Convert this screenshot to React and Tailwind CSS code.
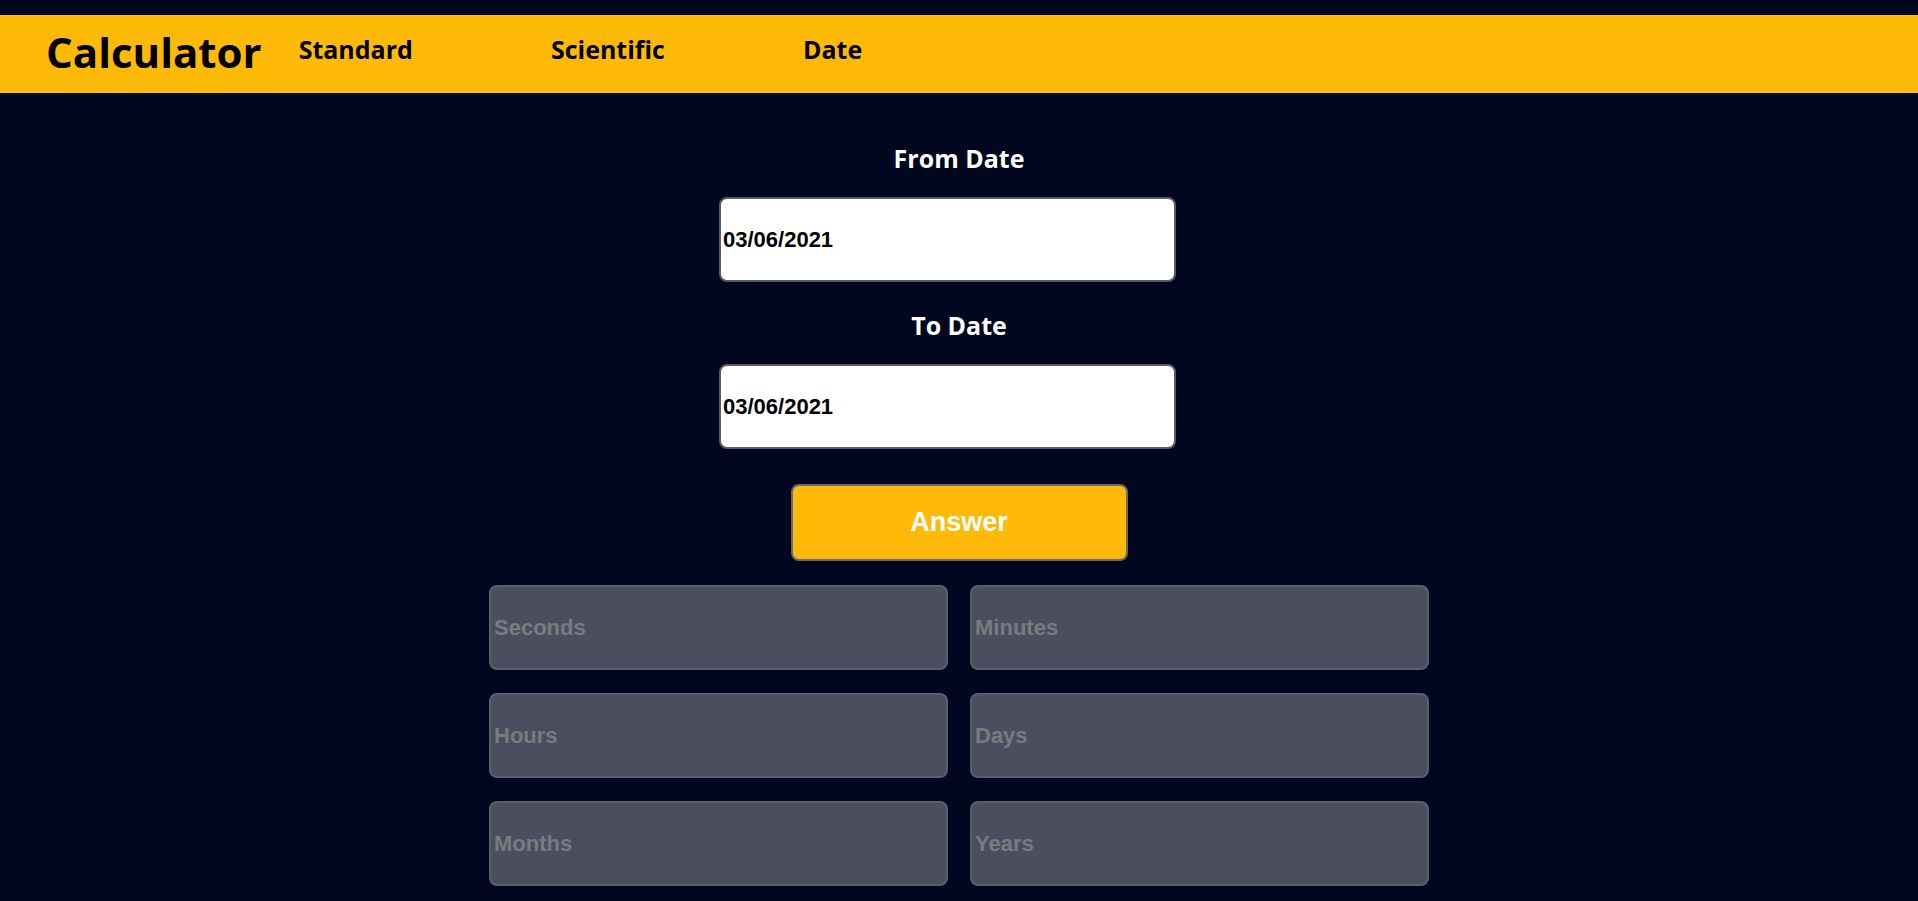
import React from 'react';

const results = ['Seconds', 'Minutes', 'Hours', 'Days', 'Months', 'Years'];

function DateField({ label, value, first }) {
    return (
        <div className="flex flex-col items-center">
            <label className={`${first ? 'mt-[48px]' : 'mt-[26px]'} text-[25px] leading-[34px] font-bold text-white font-['Open_Sans',sans-serif]`}>
                {label}
            </label>
            <div className="mt-[22px] mr-[23px] w-[457px] h-[85px] bg-white rounded-[8px] border-2 border-[#5c5c5c] flex items-center pl-[2px] text-[22px] font-bold text-black font-['Liberation_Sans',Arial,sans-serif]">
                {value}
            </div>
        </div>
    );
}

export default function App() {
    return (
        <div className="min-h-[901px] bg-[#00071e] pt-[15px]">
            <nav className="h-[78px] bg-[#ffb907] flex items-center pl-[46px] font-['Open_Sans',sans-serif] font-bold text-black">
                <span className="text-[42px] leading-none -mt-[4px]">Calculator</span>
                <div className="flex items-center gap-[138px] ml-[37px] text-[25px] -mt-[8px]">
                    <a>Standard</a>
                    <a>Scientific</a>
                    <a>Date</a>
                </div>
            </nav>

            <div className="flex flex-col items-center">
                <DateField label="From Date" value="03/06/2021" first />
                <DateField label="To Date" value="03/06/2021" />

                <button className="mt-[35px] w-[337px] h-[77px] bg-[#ffb907] rounded-[8px] border-2 border-[#6b6b6b] text-white text-[27px] font-bold font-['Liberation_Sans',Arial,sans-serif]">
                    Answer
                </button>

                <div className="mt-[24px] grid grid-cols-2 gap-x-[22px] gap-y-[23px]">
                    {results.map((r) => (
                        <div
                            key={r}
                            className="w-[459px] h-[85px] bg-[#4b4e5e] rounded-[8px] border-2 border-[#5b5e6c] flex items-center pl-[3px] text-[22px] font-bold text-[#797b80] font-['Liberation_Sans',Arial,sans-serif]"
                        >
                            {r}
                        </div>
                    ))}
                </div>
            </div>
        </div>
    );
}
